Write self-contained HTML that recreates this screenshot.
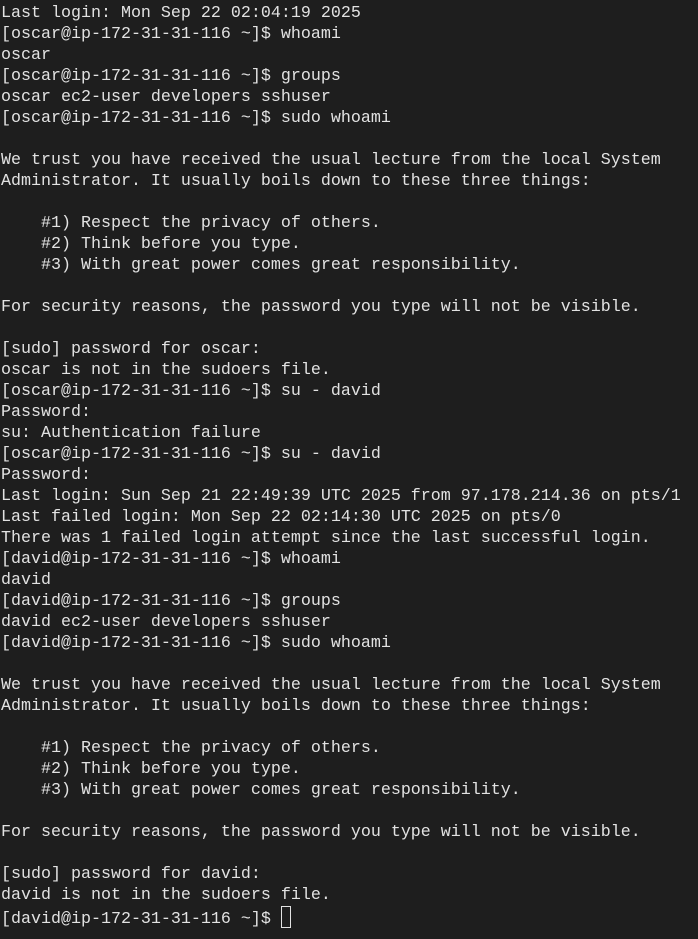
<!DOCTYPE html>
<html><head><style>
html,body{margin:0;padding:0;background:#1e1e1e;width:698px;height:939px;overflow:hidden}
pre{margin:0;padding:3px 0 0 1px;font-family:"Liberation Mono","DejaVu Sans Mono",monospace;font-size:16.67px;line-height:21px;color:#e2e2e2;white-space:pre}
.c{display:inline-block;width:8px;height:20px;border:1px solid #e2e2e2;vertical-align:-5px;margin-left:0}
</style></head><body><pre>Last login: Mon Sep 22 02:04:19 2025
[oscar@ip-172-31-31-116 ~]$ whoami
oscar
[oscar@ip-172-31-31-116 ~]$ groups
oscar ec2-user developers sshuser
[oscar@ip-172-31-31-116 ~]$ sudo whoami

We trust you have received the usual lecture from the local System
Administrator. It usually boils down to these three things:

    #1) Respect the privacy of others.
    #2) Think before you type.
    #3) With great power comes great responsibility.

For security reasons, the password you type will not be visible.

[sudo] password for oscar:
oscar is not in the sudoers file.
[oscar@ip-172-31-31-116 ~]$ su - david
Password:
su: Authentication failure
[oscar@ip-172-31-31-116 ~]$ su - david
Password:
Last login: Sun Sep 21 22:49:39 UTC 2025 from 97.178.214.36 on pts/1
Last failed login: Mon Sep 22 02:14:30 UTC 2025 on pts/0
There was 1 failed login attempt since the last successful login.
[david@ip-172-31-31-116 ~]$ whoami
david
[david@ip-172-31-31-116 ~]$ groups
david ec2-user developers sshuser
[david@ip-172-31-31-116 ~]$ sudo whoami

We trust you have received the usual lecture from the local System
Administrator. It usually boils down to these three things:

    #1) Respect the privacy of others.
    #2) Think before you type.
    #3) With great power comes great responsibility.

For security reasons, the password you type will not be visible.

[sudo] password for david:
david is not in the sudoers file.
[david@ip-172-31-31-116 ~]$ <span class="c"></span></pre></body></html>
